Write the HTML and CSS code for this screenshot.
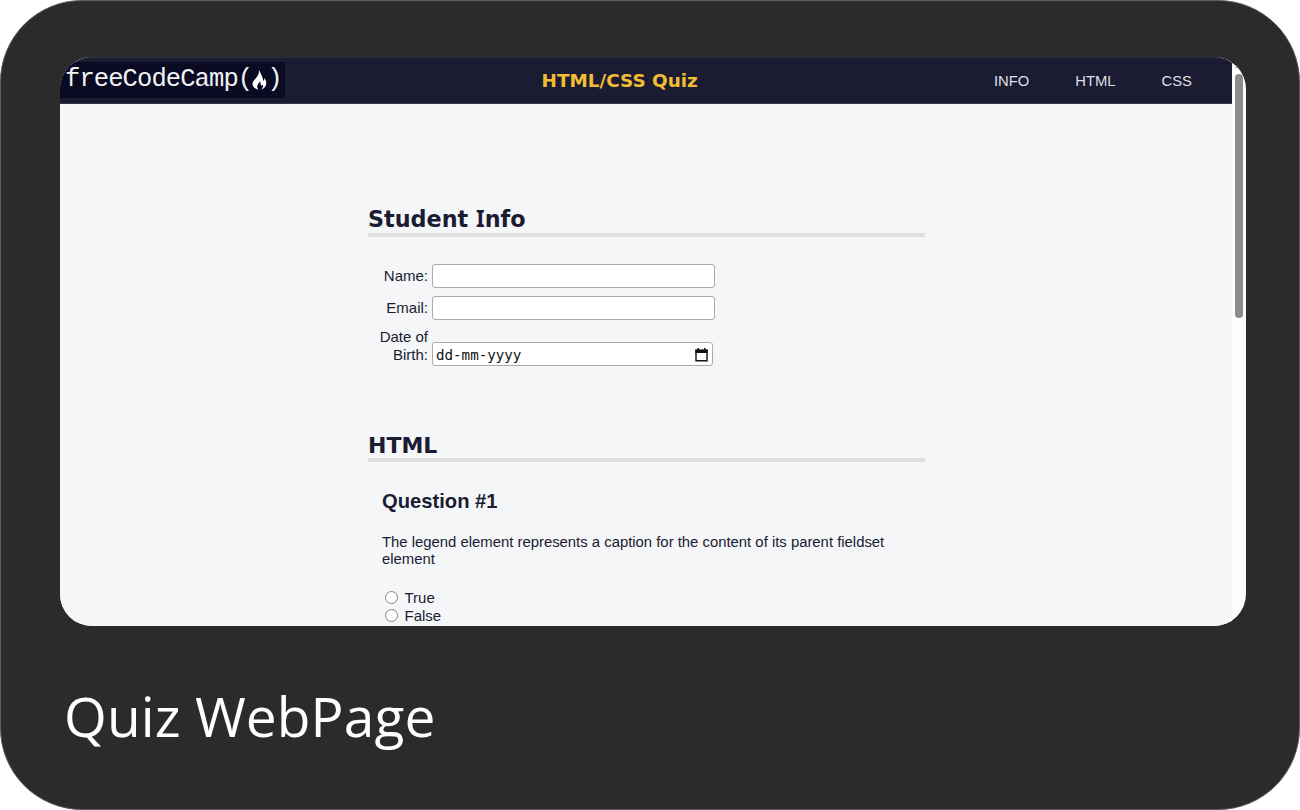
FILE: index.html
```html
<!DOCTYPE html>
<html lang="en">
<head>
<meta charset="utf-8">
<title>Quiz WebPage</title>
<link rel="stylesheet" href="styles.css">
</head>
<body>
<article class="card">
  <div class="screen">
    <div class="page">
      <header class="bar">
        <div class="logo"><span class="logo-text">freeCodeCamp(</span><svg class="flame" viewBox="0 0 15 20"><path d="M6.8 0C8.6 2.2 8.7 4 10.2 6.7C10.8 8.1 11.2 9.2 10.9 11C12.2 10.6 12.4 9.4 12 7.8C14 10.3 14.6 12.1 14.2 14C13.8 16.8 11.8 18.8 9.2 19.8C10.8 17.8 11.5 16.3 10.8 14.8C10.2 15.7 9.5 15.9 9 15.2C8.4 14.3 9 12.6 8 11C7.6 13.2 5.3 13.9 5.2 16.2C5.1 17.7 5.8 18.9 6.5 19.8C3.2 18.8 .5 16.9.5 13.9C.5 11.1 2.7 10 4.4 7.5C6.1 5.1 7.4 2.9 6.8 0Z"/></svg><span class="logo-text">)</span></div>
        <h1 class="title">HTML/CSS Quiz</h1>
        <nav class="nav"><span>INFO</span><span>HTML</span><span>CSS</span></nav>
      </header>
      <main class="main">
        <section class="info">
          <h2 class="heading heading-info">Student <span class="serif-i">I</span>nfo</h2>
          <div class="row"><label class="label" for="name">Name:</label><input class="field" id="name" type="text"></div>
          <div class="row"><label class="label" for="email">Email:</label><input class="field" id="email" type="text"></div>
          <div class="row row-date"><span class="label">Date of Birth:</span><div class="field date"><span class="date-text">dd-mm-yyyy</span><svg class="calendar" viewBox="0 0 13 14"><path d="M1 2.5h11v10.3H1z" fill="none" stroke="#111" stroke-width="1.4"/><path d="M.3 1.5h12.4V5H.3zM2.5 0h1.5v2H2.5zM9 0h1.5v2H9z" fill="#111"/></svg></div></div>
        </section>
        <section>
          <h2 class="heading heading-html">HTML</h2>
          <div class="question">
            <h3 class="q-title">Question #1</h3>
            <p class="q-text">The legend element represents a caption for the content of its parent fieldset element</p>
            <div class="option"><i class="radio"></i>True</div>
            <div class="option"><i class="radio"></i>False</div>
          </div>
        </section>
      </main>
    </div>
    <div class="scroll"><div class="arrow"></div><div class="thumb"></div></div>
  </div>
  <h2 class="caption">Quiz WebPage</h2>
</article>
</body>
</html>
```
FILE: styles.css
```css
* { box-sizing: border-box; }
body { margin: 0; background: #fff; }
.card {
  width: 1300px;
  height: 810px;
  padding: 56px 53px 0 59px;
  background: #2c2a2b;
  border: 1px solid #5e5e5e;
  border-radius: 82px;
  overflow: hidden;
}
.screen {
  width: 1185.6px;
  height: 568.6px;
  display: flex;
  background: #fcfdfd;
  border-radius: 32px;
  overflow: hidden;
  color: #1b1b32;
  font-family: "Liberation Sans", sans-serif;
  font-size: 15px;
}
.page { width: 1172px; flex: none; background: #f4f6f8; overflow: hidden; }
.bar {
  height: 47px;
  display: grid;
  grid-template-columns: 481.5px 1fr auto;
  align-items: center;
  background: #1b1b32;
  border-top: 1px solid #292f40;
  border-bottom: 1px solid #39364c;
}
.logo {
  width: 225px;
  height: 36px;
  display: flex;
  align-items: center;
  margin-top: -1px;
  padding-left: 5px;
  background: #0a0a23;
  color: #f2f2f4;
}
.logo-text { font: 25.5px/34px "Liberation Mono", monospace; letter-spacing: -0.9px; white-space: pre; }
.flame { width: 15px; height: 20px; fill: #fff; }
.title { margin: 0; color: #f1be32; font: bold 18.4px "DejaVu Sans", sans-serif; white-space: nowrap; }
.nav { display: flex; gap: 46px; padding-right: 40px; color: #dfdfe2; font-size: 14.8px; }
.main { width: 557px; margin-left: 308px; padding-top: 99px; }
.heading {
  margin: 0;
  height: 34px;
  border-bottom: 4px solid #dfdfe2;
  font: bold 22.3px/34px "DejaVu Sans", sans-serif;
  white-space: nowrap;
}
.serif-i { font-family: "Noto Sans", sans-serif; line-height: 1; }
.info { height: 225px; }
.heading-info { margin-bottom: 27px; line-height: 33px; }
.heading-html { font-size: 22px; line-height: 35px; }
.row { display: flex; align-items: center; height: 24px; margin-bottom: 8px; }
.label { width: 60px; margin-right: 4px; text-align: right; line-height: 17.5px; }
.field {
  width: 283px;
  height: 24px;
  border: 1px solid #aaa;
  border-radius: 3px;
  background: #fff;
}
.row-date { height: 38px; align-items: flex-end; }
.row-date .label { margin-bottom: 3px; }
.date { width: 281px; display: flex; justify-content: space-between; align-items: center; padding: 1px 4px 0 3px; color: #111; }
.date-text { font: 14.2px "DejaVu Sans Mono", monospace; }
.calendar { width: 13px; height: 14px; }
.question { padding-left: 14px; }
.q-title { margin: 26px 0 0; font-size: 20.2px; line-height: 26px; }
.q-text { margin: 19.5px 0 19.5px; line-height: 17.5px; width: 520px; font-size: 14.86px; }
.option { display: flex; align-items: center; height: 18.5px; }
.radio { width: 13px; height: 13px; margin: 0 6.5px 0 3px; border: 1px solid #858585; border-radius: 50%; background: #fff; }
.scroll { width: 14px; flex: none; padding: 6px 0 0 3px; }
.arrow { width: 0; height: 0; border: 4px solid transparent; border-top: 0; border-bottom: 5px solid #8b8b8b; }
.thumb { width: 8px; height: 244px; margin-top: 6px; border-radius: 4px; background: #8b8b8b; }
.caption { margin: 51px 0 0 4px; color: #fff; font: 400 55px/78px "Open Sans", sans-serif; letter-spacing: 0.1px; white-space: nowrap; }
```
